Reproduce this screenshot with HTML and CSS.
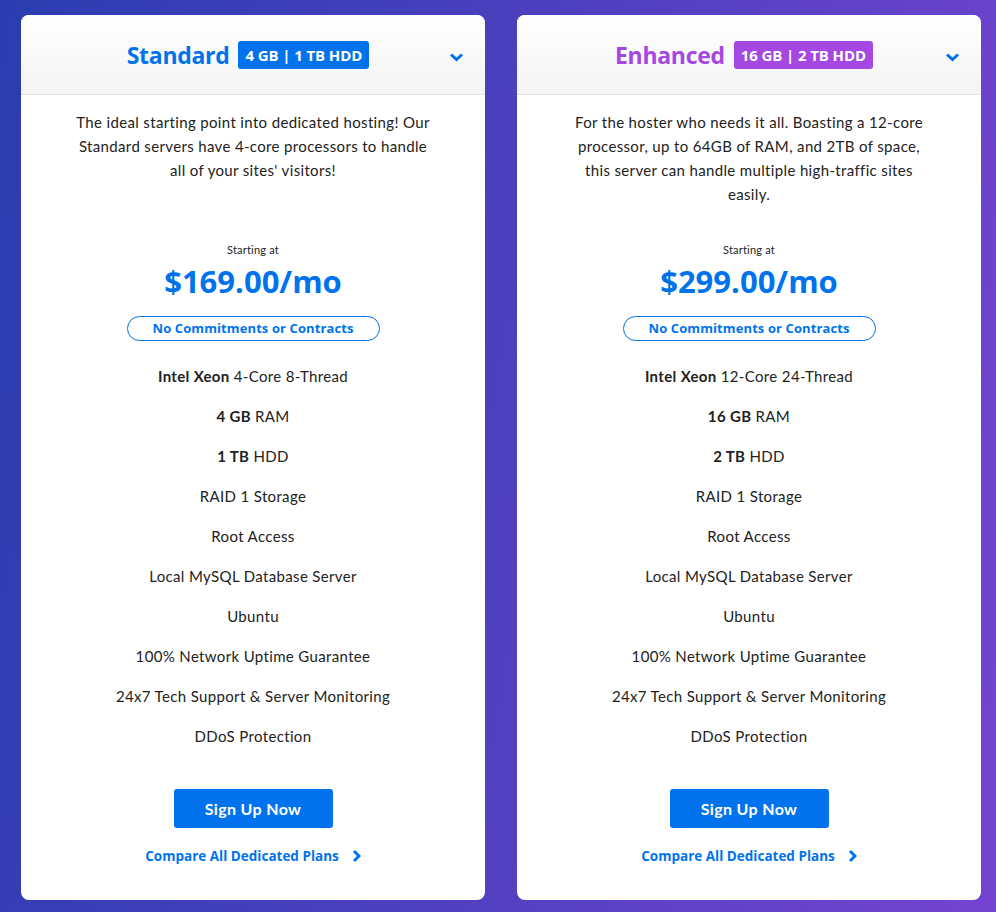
FILE: index.html
```html
<!DOCTYPE html>
<html lang="en">
<head>
    <meta charset="UTF-8">
    <meta name="viewport" content="width=device-width, initial-scale=1.0">
    <title>Dedicated Servers</title>
    <link rel="stylesheet" href="styles.css">
</head>
<body>
    <div class="plans">
        <div class="plan">
            <div class="plan-head">
                <h2 class="plan-name">Standard</h2>
                <span class="plan-badge">4 GB | 1 TB HDD</span>
                <svg class="toggle" width="15" height="10" viewBox="0 0 15 10"><polyline points="2,2.5 7.5,7.5 13,2.5" fill="none" stroke="#0073ec" stroke-width="3"/></svg>
            </div>
            <div class="plan-body">
                <p class="plan-desc">The ideal starting point into dedicated hosting! Our Standard servers have 4-core processors to handle all of your sites' visitors!</p>
                <div class="starting">Starting at</div>
                <div class="price">$169.00/mo</div>
                <div class="pill">No Commitments or Contracts</div>
                <ul class="features">
                    <li><b>Intel Xeon</b> 4-Core 8-Thread</li>
                    <li><b>4 GB</b> RAM</li>
                    <li><b>1 TB</b> HDD</li>
                    <li>RAID 1 Storage</li>
                    <li>Root Access</li>
                    <li>Local MySQL Database Server</li>
                    <li>Ubuntu</li>
                    <li>100% Network Uptime Guarantee</li>
                    <li>24x7 Tech Support &amp; Server Monitoring</li>
                    <li>DDoS Protection</li>
                </ul>
                <a class="signup" href="#">Sign Up Now</a>
                <a class="compare" href="#">Compare All Dedicated Plans
                    <svg width="10" height="14" viewBox="0 0 10 14"><polyline points="3,2 8,7 3,12" fill="none" stroke="#0073ec" stroke-width="3"/></svg>
                </a>
            </div>
        </div>

        <div class="plan enhanced">
            <div class="plan-head">
                <h2 class="plan-name">Enhanced</h2>
                <span class="plan-badge">16 GB | 2 TB HDD</span>
                <svg class="toggle" width="15" height="10" viewBox="0 0 15 10"><polyline points="2,2.5 7.5,7.5 13,2.5" fill="none" stroke="#0073ec" stroke-width="3"/></svg>
            </div>
            <div class="plan-body">
                <p class="plan-desc">For the hoster who needs it all. Boasting a 12-core processor, up to 64GB of RAM, and 2TB of space, this server can handle multiple high-traffic sites easily.</p>
                <div class="starting">Starting at</div>
                <div class="price">$299.00/mo</div>
                <div class="pill">No Commitments or Contracts</div>
                <ul class="features">
                    <li><b>Intel Xeon</b> 12-Core 24-Thread</li>
                    <li><b>16 GB</b> RAM</li>
                    <li><b>2 TB</b> HDD</li>
                    <li>RAID 1 Storage</li>
                    <li>Root Access</li>
                    <li>Local MySQL Database Server</li>
                    <li>Ubuntu</li>
                    <li>100% Network Uptime Guarantee</li>
                    <li>24x7 Tech Support &amp; Server Monitoring</li>
                    <li>DDoS Protection</li>
                </ul>
                <a class="signup" href="#">Sign Up Now</a>
                <a class="compare" href="#">Compare All Dedicated Plans
                    <svg width="10" height="14" viewBox="0 0 10 14"><polyline points="3,2 8,7 3,12" fill="none" stroke="#0073ec" stroke-width="3"/></svg>
                </a>
            </div>
        </div>
    </div>
</body>
</html>
```

FILE: styles.css
```css
body {
    margin: 0;
    height: 912px;
    overflow: hidden;
    font-family: 'Lato', sans-serif;
    letter-spacing: 0.35px;
    color: #222;
    background: linear-gradient(100deg, #2a3db0 0%, #4e40bf 50%, #7444d0 100%);
}

.plans {
    display: flex;
    gap: 32px;
    padding: 15px 15px 0 21px;
}

.plan {
    width: 464px;
    height: 885px;
    background: white;
    border-radius: 8px;
    overflow: hidden;
}

.plan-head {
    position: relative;
    height: 79px;
    padding-right: 10px;
    display: flex;
    align-items: center;
    justify-content: center;
    gap: 9px;
    background: linear-gradient(#ffffff, #f4f4f4);
    border-bottom: 1px solid #e2e2e2;
}

.plan-name {
    margin: 0;
    font-family: 'Open Sans', sans-serif;
    font-size: 23px;
    font-weight: 700;
    color: #0073ec;
    letter-spacing: -0.3px;
}

.plan-badge {
    padding: 4px 7px;
    border-radius: 3px;
    background: #0073ec;
    color: white;
    font-family: 'Open Sans', sans-serif;
    font-size: 15px;
    font-weight: 700;
    letter-spacing: -0.1px;
}

.toggle {
    position: absolute;
    right: 21px;
    top: 37px;
}

.enhanced .plan-name {
    color: #a547e0;
}

.enhanced .plan-badge {
    background: #a547e0;
}

.plan-body {
    display: flex;
    flex-direction: column;
    align-items: center;
    padding-top: 15px;
}

.plan-desc {
    margin: 0;
    width: 365px;
    height: 96px;
    font-size: 15px;
    line-height: 24px;
    text-align: center;
}

.starting {
    margin-top: 37px;
    font-size: 11px;
    line-height: 14px;
    letter-spacing: 0.2px;
}

.price {
    margin-top: 6px;
    font-family: 'Open Sans', sans-serif;
    font-size: 31px;
    font-weight: 700;
    line-height: 36px;
    color: #0073ec;
    letter-spacing: 0;
}

.pill {
    margin-top: 17px;
    width: 251px;
    height: 23px;
    line-height: 23px;
    border: 1px solid #0073ec;
    border-radius: 13px;
    text-align: center;
    font-family: 'Open Sans', sans-serif;
    font-size: 13px;
    font-weight: 700;
    letter-spacing: 0.1px;
    color: #0073ec;
}

.features {
    list-style: none;
    margin: 15px 0 0;
    padding: 0;
    text-align: center;
}

.features li {
    font-size: 15px;
    line-height: 40px;
}

.signup {
    margin-top: 33px;
    width: 159px;
    height: 39px;
    line-height: 39px;
    border-radius: 3px;
    background: #0073ec;
    color: white;
    text-align: center;
    text-decoration: none;
    font-size: 16px;
    font-weight: 700;
}

.compare {
    margin-top: 18px;
    display: flex;
    align-items: center;
    gap: 12px;
    line-height: 20px;
    font-family: 'Open Sans', sans-serif;
    font-size: 13.5px;
    font-weight: 700;
    letter-spacing: 0;
    color: #0073ec;
    text-decoration: none;
}
```
